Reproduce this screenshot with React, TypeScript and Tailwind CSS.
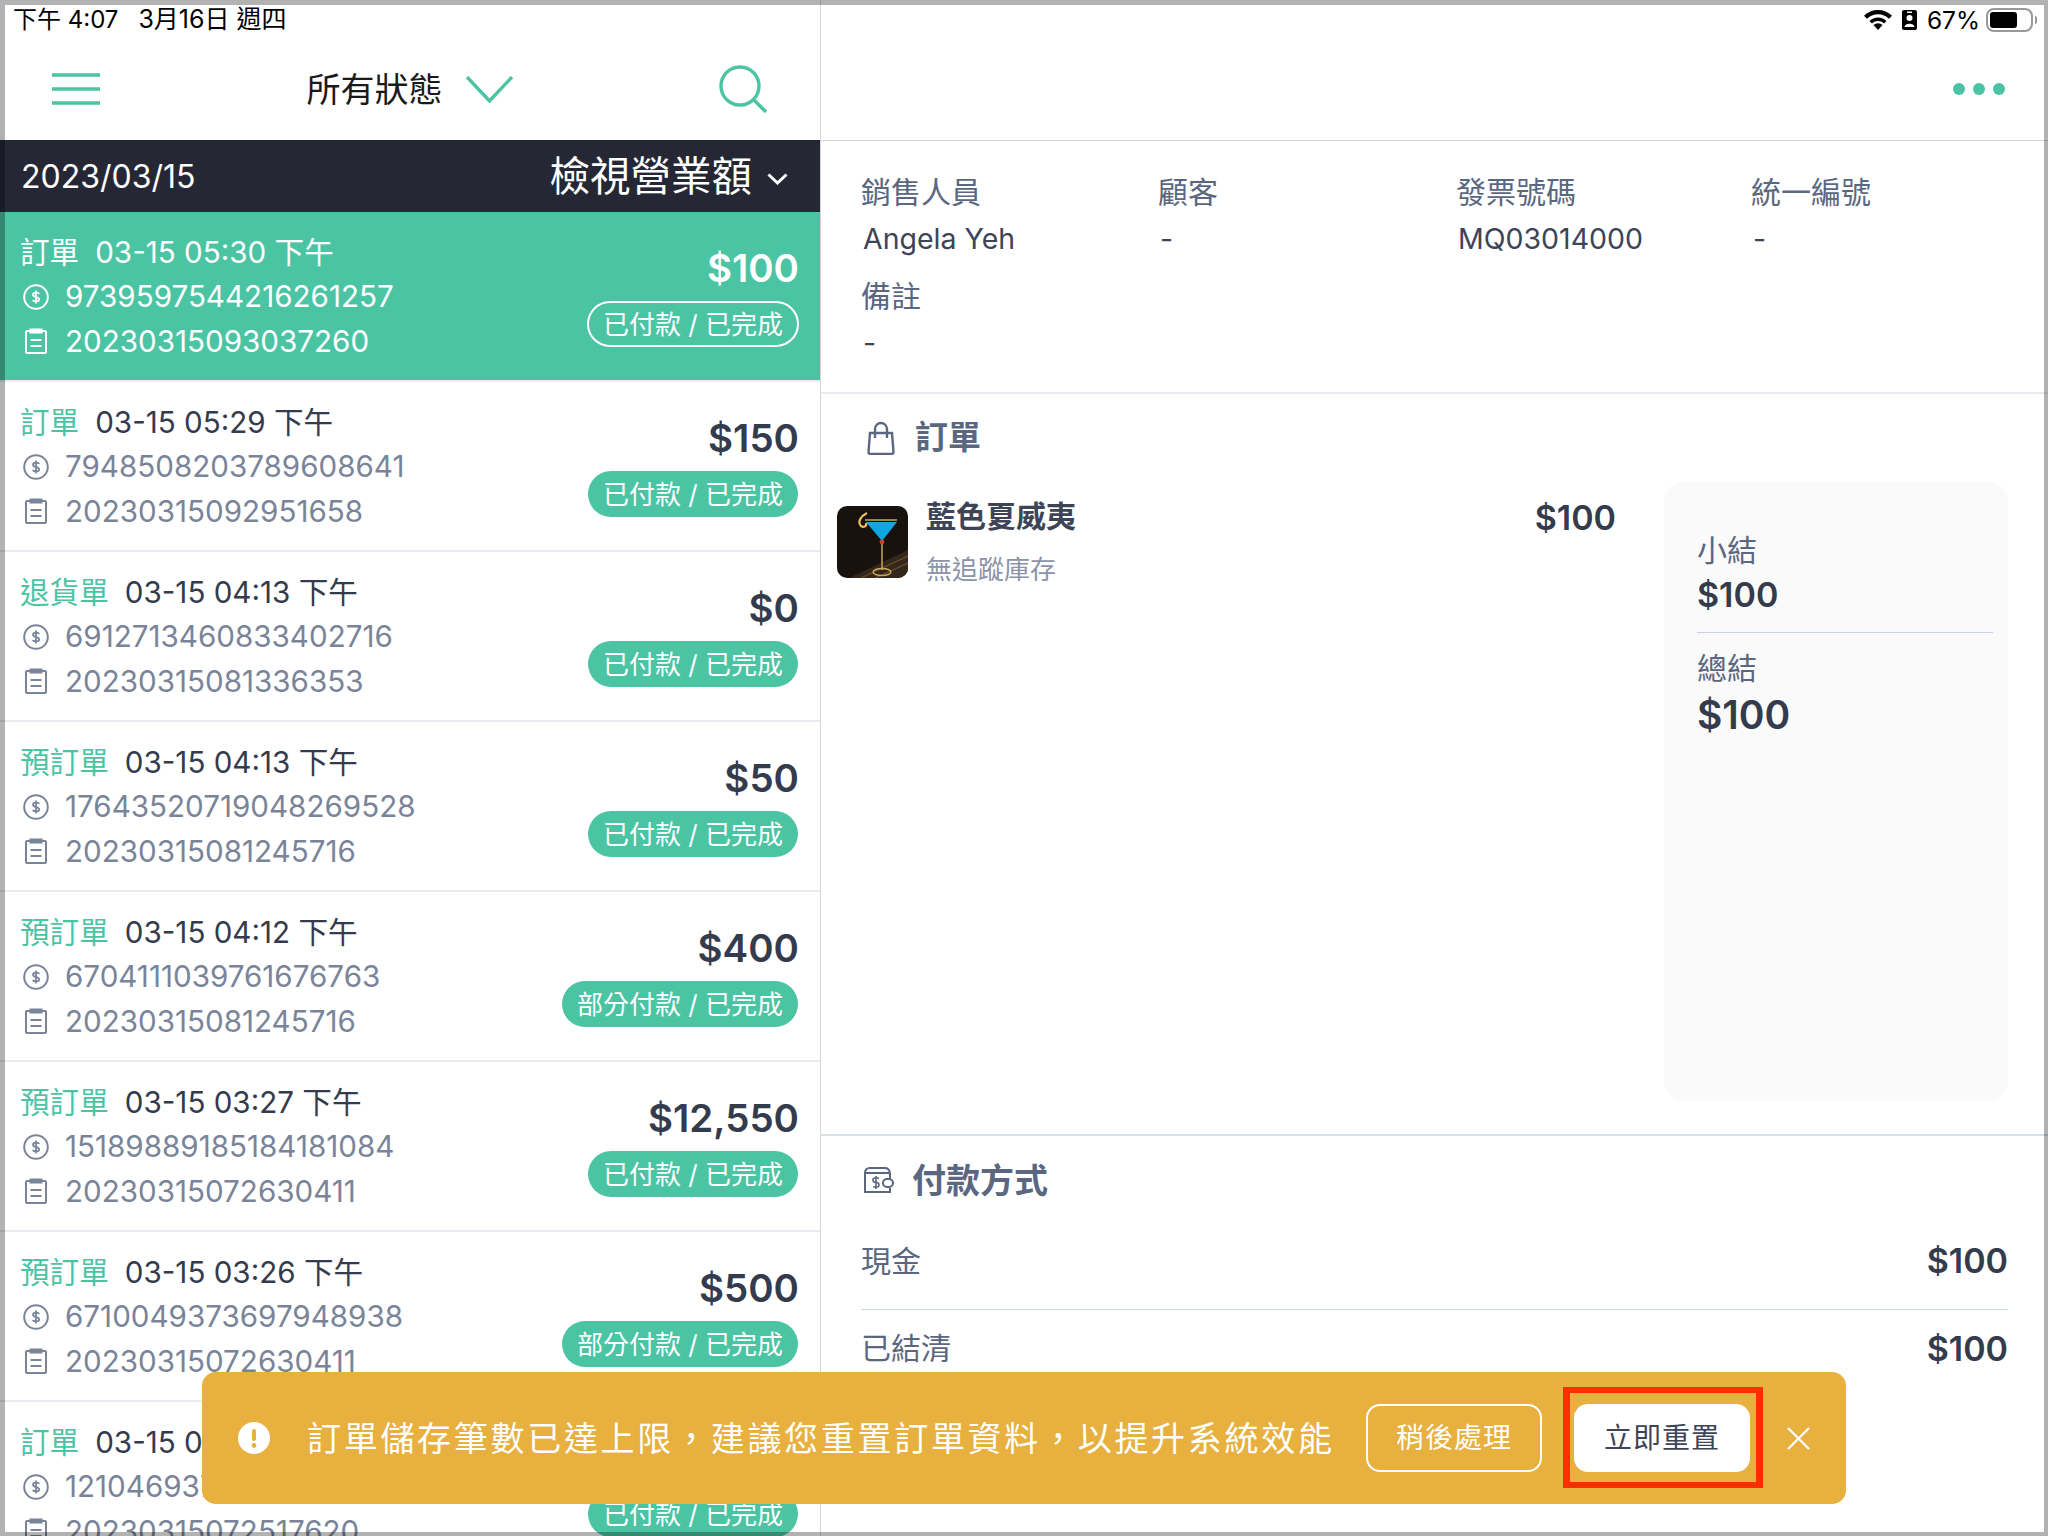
const ORDERS = [
  { type: "訂單", time: "03-15 05:30 下午", pay: "9739597544216261257", no: "20230315093037260", total: "$100", status: "已付款 / 已完成" },
  { type: "訂單", time: "03-15 05:29 下午", pay: "7948508203789608641", no: "20230315092951658", total: "$150", status: "已付款 / 已完成" },
  { type: "退貨單", time: "03-15 04:13 下午", pay: "6912713460833402716", no: "20230315081336353", total: "$0", status: "已付款 / 已完成" },
  { type: "預訂單", time: "03-15 04:13 下午", pay: "17643520719048269528", no: "20230315081245716", total: "$50", status: "已付款 / 已完成" },
  { type: "預訂單", time: "03-15 04:12 下午", pay: "6704111039761676763", no: "20230315081245716", total: "$400", status: "部分付款 / 已完成" },
  { type: "預訂單", time: "03-15 03:27 下午", pay: "15189889185184181084", no: "20230315072630411", total: "$12,550", status: "已付款 / 已完成" },
  { type: "預訂單", time: "03-15 03:26 下午", pay: "6710049373697948938", no: "20230315072630411", total: "$500", status: "部分付款 / 已完成" },
  { type: "訂單", time: "03-15 03:25 下午", pay: "1210469373697948938", no: "20230315072517620", total: "$300", status: "已付款 / 已完成" },
];

function DollarIcon() {
  return (
    <svg width="26" height="26" viewBox="0 0 26 26" fill="none" stroke="currentColor" strokeWidth="2">
      <circle cx="13" cy="13" r="11.8" />
      <path d="M16.2 10 C15.5 8.2 10 8 10 10.8 C10 14 16.2 12.4 16.2 15.6 C16.2 18 10.8 18 9.8 16 M13 6.6 V19.4" strokeWidth="1.8" />
    </svg>
  );
}

function ReceiptIcon() {
  return (
    <svg width="22" height="26" viewBox="0 0 22 26" fill="none" stroke="currentColor" strokeWidth="2">
      <path d="M5 3 H2 Q1 3 1 4 V24 Q1 25 2 25 H20 Q21 25 21 24 V4 Q21 3 20 3 H17" />
      <rect x="5" y="1" width="12" height="4" fill="currentColor" strokeWidth="1" />
      <path d="M5.5 12 H16.5 M5.5 18 H16.5" />
    </svg>
  );
}

function OrderRow({ order, active }: { order: (typeof ORDERS)[number]; active: boolean }) {
  return (
    <div
      className={`flex h-[170px] shrink-0 justify-between border-b-2 border-[#e8ecf1] pl-[20px] pr-[21px] pt-[18px] ${
        active ? "bg-[#4bc4a3] text-white" : ""
      }`}
    >
      <div className="flex flex-col text-[29.6px]">
        <div className="flex h-[44px] items-center gap-[16px]">
          <span className={active ? "" : "text-[#4bc4a3]"}>{order.type}</span>
          <span className={active ? "" : "text-[#343b4c]"}>{order.time}</span>
        </div>
        <div className={`flex h-[45px] items-center gap-[14px] ${active ? "" : "text-[#7a8499]"}`}>
          <span className="flex w-[31px] justify-center">
            <DollarIcon />
          </span>
          <span>{order.pay}</span>
        </div>
        <div className={`flex h-[44px] items-center gap-[14px] ${active ? "" : "text-[#7a8499]"}`}>
          <span className="flex w-[31px] justify-center">
            <ReceiptIcon />
          </span>
          <span>{order.no}</span>
        </div>
      </div>
      <div className="mt-[13px] flex flex-col items-end">
        <span className={`h-[50px] text-[38.5px] font-semibold leading-[50px] ${active ? "" : "text-[#343b4c]"}`}>
          {order.total}
        </span>
        <span
          className={`mt-[8px] flex h-[46px] items-center rounded-full text-[26px] ${
            active ? "border-2 border-white px-[14px]" : "mr-[1px] bg-[#4bc4a3] px-[15px] text-white"
          }`}
        >
          {order.status}
        </span>
      </div>
    </div>
  );
}

function InfoCell({ label, value }: { label: string; value: string }) {
  return (
    <div>
      <div className="flex h-[47px] items-center text-[30px] text-[#5b6780]">{label}</div>
      <div className="flex h-[46px] items-center pl-[2px] text-[28.5px] text-[#3d4456]">{value}</div>
    </div>
  );
}

function Cocktail() {
  return (
    <svg width="71" height="72" viewBox="0 0 71 72" className="shrink-0 rounded-[10px]">
      <rect width="71" height="72" fill="#17120d" />
      <path d="M12 72 L71 44 V72Z" fill="#33261a" />
      <path d="M24 72 L71 50 M38 72 L71 57" stroke="#6a4f2a" strokeWidth="1.3" />
      <path d="M29 16 H60 L45 35Z" fill="#0ea7e2" />
      <path d="M28 14 H60" stroke="#c9a75a" strokeWidth="1.4" />
      <circle cx="45" cy="36" r="2.4" fill="#c8452c" />
      <path d="M45 38 V64" stroke="#c9a75a" strokeWidth="1.5" />
      <ellipse cx="45" cy="66" rx="9" ry="3.5" fill="none" stroke="#c9a75a" strokeWidth="1.4" />
      <path d="M30 7 C24 10 20 16 24 20 C27 22 30 20 29 17" fill="none" stroke="#e6c35c" strokeWidth="2.2" />
    </svg>
  );
}

export default function App() {
  return (
    <div className="relative flex h-[1536px] w-[2048px] overflow-hidden bg-white font-['Inter','Noto_Sans_CJK_TC',sans-serif]">
      {/* left: order list */}
      <div className="flex w-[821px] shrink-0 flex-col border-r border-[#d6d6d6]">
        <div className="flex h-[38px] items-center gap-[20px] pl-[13px] pt-[2px] text-black">
          <span className="text-[24px]">下午 4:07</span>
          <span className="text-[25px]">3月16日 週四</span>
        </div>
        <div className="relative flex h-[102px] items-center justify-between pl-[52px] pr-[53px]">
          <svg width="48" height="32" viewBox="0 0 48 32" stroke="#4bc4a3" strokeWidth="3.5">
            <path d="M0 2h48M0 16h48M0 30h48" />
          </svg>
          <div className="flex items-center gap-[23px] text-[34px] text-[#1a1a1a]">
            <span>所有狀態</span>
            <svg width="47" height="27" viewBox="0 0 47 27" fill="none" stroke="#4bc4a3" strokeWidth="3.4">
              <path d="M1 1 L23.5 25 L46 1" />
            </svg>
          </div>
          <svg width="48" height="48" viewBox="0 0 48 48" fill="none" stroke="#4bc4a3" strokeWidth="3.4">
            <circle cx="21" cy="21" r="19" />
            <path d="M35 35 L47 47" />
          </svg>
        </div>
        <div className="flex h-[72px] shrink-0 items-center justify-between bg-[#252834] pl-[21px] pr-[32px] text-white">
          <span className="pt-[2px] text-[32px]">2023/03/15</span>
          <div className="flex items-center gap-[15px]">
            <span className="pt-[2px] text-[40.5px]">檢視營業額</span>
            <svg width="21" height="12" viewBox="0 0 21 12" fill="none" stroke="white" strokeWidth="3" className="mt-[6px]">
              <path d="M1.5 1.5 L10.5 10 L19.5 1.5" />
            </svg>
          </div>
        </div>
        <div className="flex flex-1 flex-col overflow-hidden">
          {ORDERS.map((o, i) => (
            <OrderRow key={i} order={o} active={i === 0} />
          ))}
        </div>
      </div>

      {/* right: order detail */}
      <div className="flex flex-1 flex-col">
        <div className="flex h-[38px] items-center justify-end gap-[6px] pr-[11px] pt-[2px] text-black">
          <div className="flex items-center gap-[10px]">
            <svg width="28" height="20" viewBox="0 0 28 20" fill="black">
              <path d="M14 20 L9.5 15 A6.5 6.5 0 0 1 18.5 15Z" />
              <path d="M14 7.5 A12 12 0 0 1 22.5 11 L20 13.6 A8.5 8.5 0 0 0 8 13.6 L5.5 11 A12 12 0 0 1 14 7.5Z" />
              <path d="M14 0 A20 20 0 0 1 28 5.8 L25 8.8 A15.5 15.5 0 0 0 3 8.8 L0 5.8 A20 20 0 0 1 14 0Z" />
            </svg>
            <svg width="15" height="20" viewBox="0 0 15 20">
              <rect width="15" height="20" rx="2" fill="black" />
              <circle cx="7.5" cy="8" r="3" fill="white" />
              <path d="M2.5 17 C2.5 12.5 12.5 12.5 12.5 17Z" fill="white" />
              <rect x="5" y="1.5" width="5" height="1.5" fill="white" />
            </svg>
            <span className="text-[24.5px] leading-none">67%</span>
          </div>
          <div className="flex items-center gap-[2px]">
            <div className="flex h-[24px] w-[47px] items-center rounded-[8px] border-2 border-[#999999] pl-[2px]">
              <div className="h-[16px] w-[27px] rounded-[3px] bg-black" />
            </div>
            <div className="h-[8px] w-[2px] rounded-r-full bg-[#999999]" />
          </div>
        </div>
        <div className="flex h-[103px] shrink-0 items-center justify-end gap-[8px] border-b border-[#d6d6d6] pr-[43px]">
          <span className="size-[12px] rounded-full bg-[#4bc4a3]" />
          <span className="size-[12px] rounded-full bg-[#4bc4a3]" />
          <span className="size-[12px] rounded-full bg-[#4bc4a3]" />
        </div>

        <div className="grid shrink-0 grid-cols-[297px_298px_295px_1fr] gap-y-[11px] border-b-2 border-[#e8ecf1] pb-[26px] pl-[40px] pt-[28px]">
          <InfoCell label="銷售人員" value="Angela Yeh" />
          <InfoCell label="顧客" value="-" />
          <InfoCell label="發票號碼" value="MQ03014000" />
          <InfoCell label="統一編號" value="-" />
          <InfoCell label="備註" value="-" />
        </div>

        <div className="flex h-[742px] shrink-0 flex-col border-b-2 border-[#d9e0e8] pt-[20px]">
          <div className="flex h-[48px] items-center gap-[20px] pl-[46px] text-[33px] font-semibold text-[#5b6780]">
            <svg width="28" height="34" viewBox="0 0 28 34" fill="none" stroke="#5b6780" strokeWidth="2.4">
              <path d="M3 12 H25 L26.5 31 Q26.5 33 24.5 33 H3.5 Q1.5 33 1.5 31Z" />
              <path d="M8 17 V8 A6 6 0 0 1 20 8 V17" />
            </svg>
            <span>訂單</span>
          </div>
          <div className="mt-[20px] flex flex-1 pr-[40px]">
            <div className="flex flex-1 items-start pl-[16px] pt-[24px]">
              <Cocktail />
              <div className="ml-[18px] flex flex-col">
                <span className="mt-[-10px] text-[30px] font-bold leading-[40px] text-[#3d4456]">藍色夏威夷</span>
                <span className="mt-[14px] text-[26px] leading-[40px] text-[#8a93a8]">無追蹤庫存</span>
              </div>
              <span className="ml-auto mr-[48px] mt-[-8px] text-[34px] font-semibold leading-[40px] text-[#343b4c]">$100</span>
            </div>
            <div className="mb-[33px] flex w-[344px] flex-col rounded-[20px] bg-[#fafafb] pl-[33px] pr-[15px]">
              <span className="mt-[48px] text-[30px] leading-[40px] text-[#5b6780]">小結</span>
              <span className="mt-[3px] text-[34px] font-semibold leading-[44px] text-[#343b4c]">$100</span>
              <div className="mt-[15px] h-px bg-[#c9d3df]" />
              <span className="mt-[15px] text-[30px] leading-[40px] text-[#5b6780]">總結</span>
              <span className="mt-[2px] text-[39px] font-semibold leading-[50px] text-[#343b4c]">$100</span>
            </div>
          </div>
        </div>

        <div className="flex flex-col pt-[20px]">
          <div className="flex h-[48px] items-center gap-[18px] pl-[43px] text-[34px] font-semibold text-[#5b6780]">
            <svg width="30" height="26" viewBox="0 0 30 26" fill="none" stroke="#5b6780" strokeWidth="2">
              <path d="M1 6 Q1 1 6 1 H21 Q25 1 26 6" />
              <path d="M1 6 V25 H26 V21 M26 6 H1 M26 12 V6" />
              <rect x="19" y="12" width="10" height="8" rx="4" />
              <path d="M15 11 H11 Q9 11 9 13 Q9 15.5 12 15.5 Q15 15.5 15 18 Q15 20 13 20 H9 M12 9 V22" strokeWidth="1.6" />
            </svg>
            <span>付款方式</span>
          </div>
          <div className="ml-[40px] mr-[40px] mt-[9px] flex h-[97px] items-center justify-between border-b border-[#c9d6e3]">
            <span className="text-[30px] text-[#5b6780]">現金</span>
            <span className="pb-[2px] text-[34px] font-semibold text-[#343b4c]">$100</span>
          </div>
          <div className="ml-[40px] mr-[40px] flex h-[76px] items-center justify-between">
            <span className="text-[30px] text-[#5b6780]">已結清</span>
            <span className="text-[34px] font-semibold text-[#343b4c]">$100</span>
          </div>
        </div>
      </div>

      {/* storage warning banner */}
      <div className="absolute left-[202px] top-[1372px] flex h-[132px] w-[1644px] items-center rounded-[14px] bg-[#e7b03f] pl-[36px] pr-[36px] text-white">
        <svg width="32" height="32" viewBox="0 0 32 32" className="shrink-0">
          <circle cx="16" cy="16" r="16" fill="white" />
          <rect x="14" y="7" width="4" height="12" rx="2" fill="#e7b03f" />
          <circle cx="16" cy="23.5" r="2.4" fill="#e7b03f" />
        </svg>
        <span className="ml-[37px] whitespace-nowrap text-[34px] tracking-[2.7px]">
          訂單儲存筆數已達上限，建議您重置訂單資料，以提升系統效能
        </span>
        <button
          type="button"
          className="ml-auto flex h-[68px] w-[176px] items-center justify-center rounded-[14px] border-2 border-white text-[28px] tracking-[1px]"
        >
          稍後處理
        </button>
        <div className="relative ml-[32px]">
          <button
            type="button"
            className="flex h-[68px] w-[176px] items-center justify-center rounded-[14px] bg-white text-[28px] tracking-[1px] text-[#3d4456]"
          >
            立即重置
          </button>
          <div className="absolute bottom-[-16px] left-[-11px] right-[-13px] top-[-17px] border-x-[7px] border-y-[6px] border-[#ff2d00]" />
        </div>
        <svg width="23" height="23" viewBox="0 0 23 23" fill="none" stroke="white" strokeWidth="2.4" className="ml-[37px] shrink-0">
          <path d="M1 1 L22 22 M22 1 L1 22" />
        </svg>
      </div>

      {/* screenshot frame */}
      <div className="pointer-events-none absolute inset-0 border-b-[4px] border-l-[5px] border-r-[4px] border-t-[5px] border-black/30" />
    </div>
  );
}
